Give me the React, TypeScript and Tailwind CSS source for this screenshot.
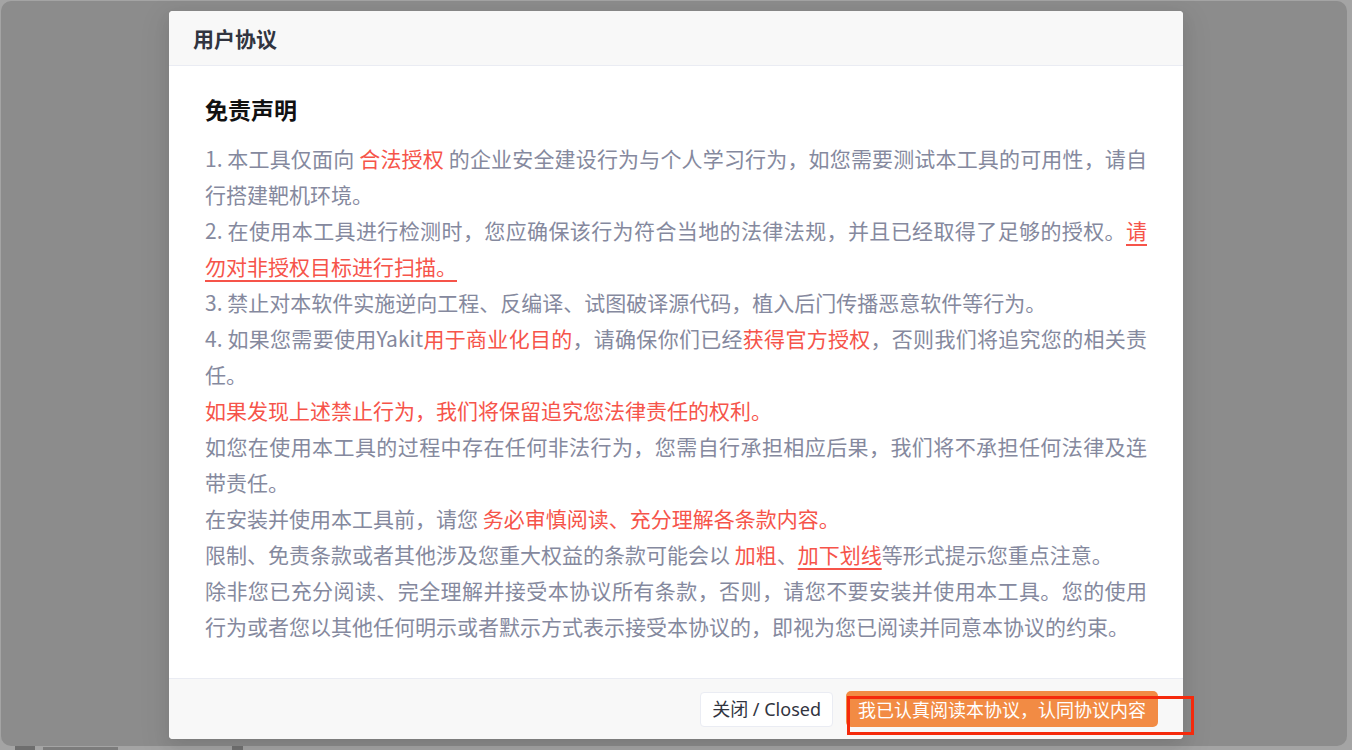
import React from "react";

const R = ({ children, u }: { children: React.ReactNode; u?: boolean }) => (
  <span className={u ? "text-[#F6544A] underline decoration-[#F6544A] underline-offset-[5px]" : "text-[#F6544A]"}>
    {children}
  </span>
);

export default function App() {
  return (
    <div
      className="relative w-[1352px] h-[750px] overflow-hidden bg-[#a4a4a4]"
      style={{ fontFamily: '"Noto Sans", "Noto Sans CJK SC", sans-serif' }}
    >
      <div className="absolute left-[1px] top-[1px] w-[1346px] h-[745px] rounded-[10px] bg-[#8c8c8c]" />
      {/* faint content under bottom edge */}
      <div className="absolute left-0 top-[746px] w-full h-[4px] flex items-start">
        <div className="ml-[15px] w-[20px] h-[4px] bg-[#6e6e6e]" />
        <div className="ml-[8px] w-[75px] h-[3px] mt-[1px] bg-[#7c7c7c]" />
        <div className="ml-[114px] w-[11px] h-[4px] bg-[#737373]" />
      </div>

      <div className="relative flex justify-center pt-[11px]">
        <div className="w-[1014px] rounded-[4px] bg-white overflow-hidden shadow-[0_6px_16px_rgba(0,0,0,0.08),0_9px_28px_8px_rgba(0,0,0,0.05)]">
          <div className="h-[55px] bg-[#f8f8f8] border-b border-[#eaecf3] px-6 flex items-center">
            <span
              className="text-[21px] font-semibold text-[#31343F] pt-[2px]"
              style={{ fontFamily: '"Noto Sans CJK SC", sans-serif' }}
            >
              用户协议
            </span>
          </div>
          <div
            className="px-9 pt-[25px] pb-[34px]"
            style={{ fontFamily: '"Noto Sans CJK SC", sans-serif' }}
          >
            <div className="h-[36px] leading-[36px] text-[23px] font-bold text-[#111111] mb-[13px]">免责声明</div>
            <div className="w-[942px] text-[21px] leading-[36px] text-[#85899E] text-justify">
              <div>
                1. 本工具仅面向 <R>合法授权</R> 的企业安全建设行为与个人学习行为，如您需要测试本工具的可用性，请自行搭建靶机环境。
              </div>
              <div>
                2. 在使用本工具进行检测时，您应确保该行为符合当地的法律法规，并且已经取得了足够的授权。<R u>请勿对非授权目标进行扫描。</R>
              </div>
              <div>3. 禁止对本软件实施逆向工程、反编译、试图破译源代码，植入后门传播恶意软件等行为。</div>
              <div>
                4. 如果您需要使用Yakit<R>用于商业化目的</R>，请确保你们已经<R>获得官方授权</R>，否则我们将追究您的相关责任。
              </div>
              <div>
                <R>如果发现上述禁止行为，我们将保留追究您法律责任的权利。</R>
              </div>
              <div>如您在使用本工具的过程中存在任何非法行为，您需自行承担相应后果，我们将不承担任何法律及连带责任。</div>
              <div>
                在安装并使用本工具前，请您 <R>务必审慎阅读、充分理解各条款内容。</R>
              </div>
              <div>
                限制、免责条款或者其他涉及您重大权益的条款可能会以 <R>加粗</R>、<R u>加下划线</R>等形式提示您重点注意。
              </div>
              <div>
                除非您已充分阅读、完全理解并接受本协议所有条款，否则，请您不要安装并使用本工具。您的使用行为或者您以其他任何明示或者默示方式表示接受本协议的，即视为您已阅读并同意本协议的约束。
              </div>
            </div>
          </div>
          <div className="h-[61px] bg-[#f8f8f8] border-t border-[#eaecf3] flex items-center justify-end gap-[13px] pr-[25px]">
            <button
              className="h-[35px] px-[11px] rounded-[4px] border border-[#eaecf3] bg-white text-[18px] text-[#31343F] leading-none"
              style={{ fontFamily: '"Noto Sans", "Noto Sans CJK SC", sans-serif' }}
            >
              关闭 / Closed
            </button>
            <button
              className="h-[36px] px-[12px] rounded-[5px] bg-[#F28B44] text-[18px] text-white leading-none"
              style={{ fontFamily: '"Noto Sans CJK SC", sans-serif' }}
            >
              我已认真阅读本协议，认同协议内容
            </button>
          </div>
        </div>
      </div>

      {/* red annotation box */}
      <div className="absolute left-[847px] top-[696px] w-[347px] h-[39px] border-[3px] border-[#f52a0c]" />
    </div>
  );
}
